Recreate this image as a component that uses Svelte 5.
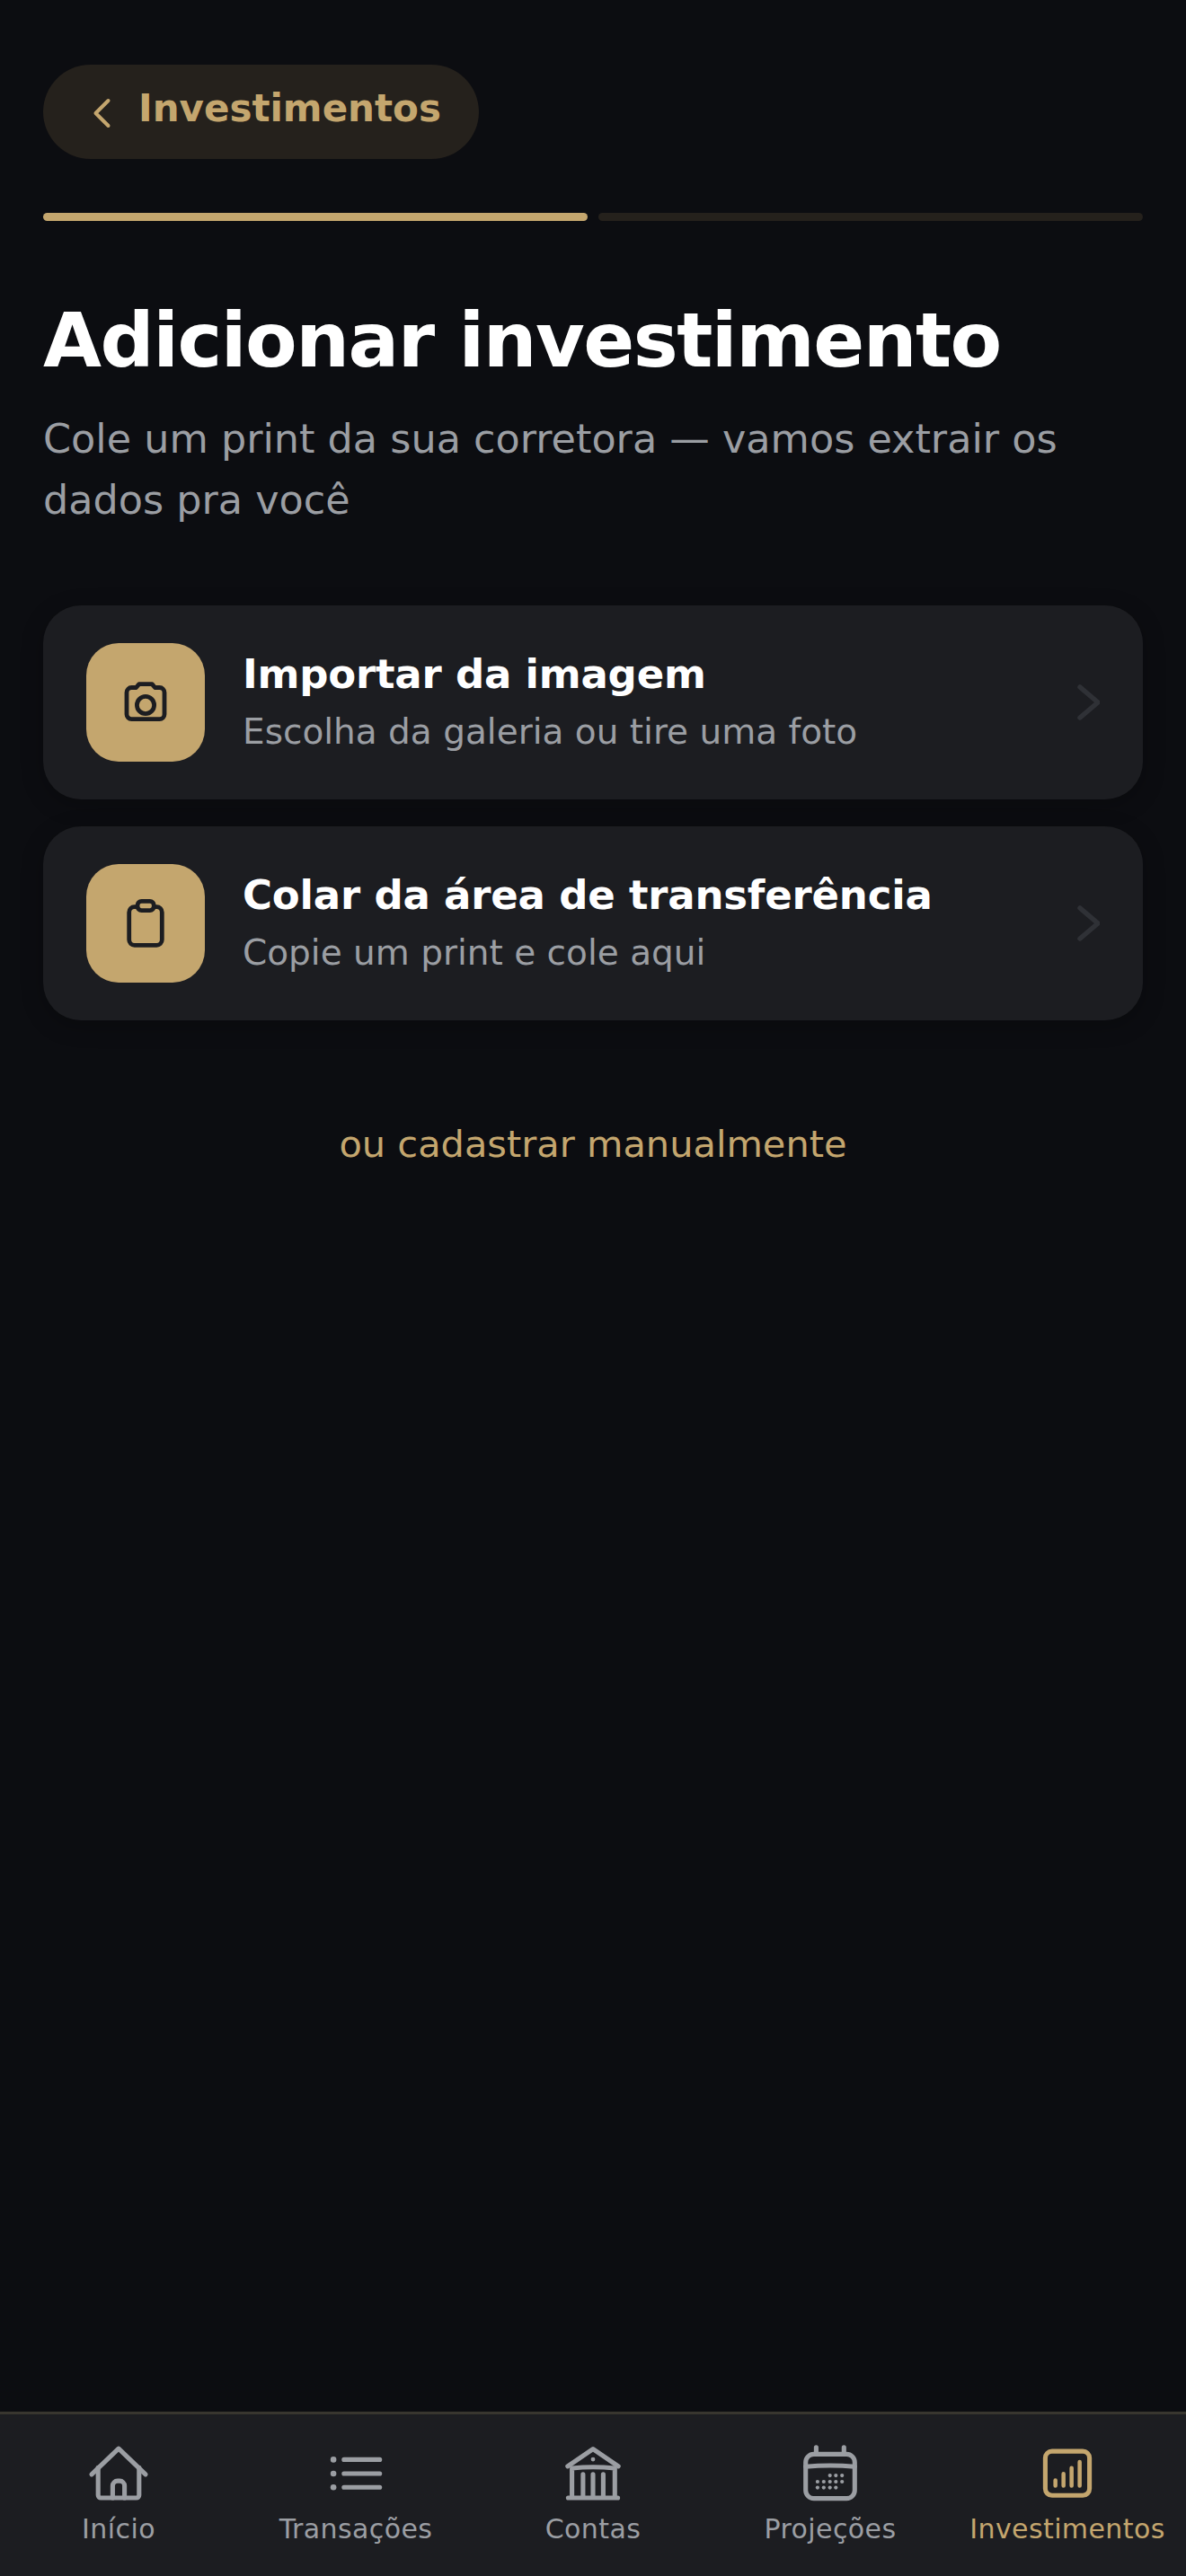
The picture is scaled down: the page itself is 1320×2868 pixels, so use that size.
<script lang="ts">
  const actions = [
    { title: "Importar da imagem", hint: "Escolha da galeria ou tire uma foto", icon: "camera" },
    { title: "Colar da área de transferência", hint: "Copie um print e cole aqui", icon: "clipboard" },
  ];

  const tabs = [
    { label: "Início", icon: "home" },
    { label: "Transações", icon: "list" },
    { label: "Contas", icon: "bank" },
    { label: "Projeções", icon: "calendar" },
    { label: "Investimentos", icon: "chart", active: true },
  ];

  const calendarDots = [
    [11.9, 12.7], [14.1, 12.7], [16.4, 12.7],
    [7.3, 15], [9.6, 15], [11.9, 15], [14.1, 15], [16.4, 15],
    [7.3, 17.2], [9.6, 17.2], [11.9, 17.2], [14.1, 17.2],
  ];
</script>

<div class="screen">
  <main class="content">
    <button class="back">
      <svg class="back-icon" width="48" height="48" viewBox="0 0 48 48" fill="none">
        <path d="M30.5 10 16.5 24l14 14" />
      </svg>
      <span class="back-label">Investimentos</span>
    </button>

    <div class="steps">
      <span class="step done"></span>
      <span class="step"></span>
    </div>

    <h1>Adicionar investimento</h1>
    <p class="lead">Cole um print da sua corretora — vamos extrair os dados pra você</p>

    <div class="actions">
      {#each actions as action}
        <button class="card">
          <span class="card-icon">
            <svg width="72" height="72" viewBox="0 0 24 24" fill="none">
              {#if action.icon === "camera"}
                <path d="M5 8.300a1.800 1.800 0 0 1 1.800-1.800h1.700l1.100-1.300h4.800l1.100 1.300h1.700a1.800 1.800 0 0 1 1.800 1.800v8.100a1.800 1.800 0 0 1-1.800 1.800H6.800a1.800 1.800 0 0 1-1.800-1.800z" />
                <circle cx="12" cy="13" r="3.200" />
              {:else}
                <rect x="5.900" y="5.900" width="12.200" height="14.200" rx="2" />
                <rect x="9" y="3.800" width="6.100" height="3.400" rx="1.500" />
              {/if}
            </svg>
          </span>
          <span class="card-text">
            <span class="card-title">{action.title}</span>
            <span class="card-hint">{action.hint}</span>
          </span>
          <svg class="card-arrow" width="48" height="48" viewBox="0 0 48 48" fill="none">
            <path d="M26 7l20 17-20 17" />
          </svg>
        </button>
      {/each}
    </div>

    <button class="manual">ou cadastrar manualmente</button>
  </main>

  <nav class="tabbar">
    {#each tabs as tab}
      <div class="tab" class:active={tab.active}>
        <svg width="72" height="72" viewBox="0 0 24 24" fill="none">
          {#if tab.icon === "home"}
            <path d="M2 12.300 12 2.700l10 9.600" />
            <path d="M4.400 9.800V20a1 1 0 0 0 1 1h13.200a1 1 0 0 0 1-1V9.800" />
            <path d="M9.800 21v-4.500a1.800 1.800 0 0 1 1.800-1.800h.8a1.800 1.800 0 0 1 1.800 1.800V21" />
          {:else if tab.icon === "list"}
            <path d="M7.600 6.800h13.300M7.600 12h13.300M7.600 17.100h13.300" />
            <circle class="dot" cx="3.700" cy="6.800" r="1.100" />
            <circle class="dot" cx="3.700" cy="12" r="1.100" />
            <circle class="dot" cx="3.700" cy="17.100" r="1.100" />
          {:else if tab.icon === "bank"}
            <path d="M2.600 9.300 12 2.900l9.400 6.400" />
            <circle class="dot" cx="12" cy="6.700" r=".8" />
            <path d="M4.200 20.800V10q7.800-.8 15.900 0v10.800" />
            <path d="M8.300 12.300v8.500M12 12.300v8.500M15.800 12.300v8.500" />
            <path d="M2.800 21h18.400" />
          {:else if tab.icon === "calendar"}
            <rect x="2.900" y="4.800" width="18.200" height="16.400" rx="3" />
            <path d="M6.800 2.300v2.500M17.100 2.300v2.500" />
            <path d="M2.900 9.400Q12 8.600 21.100 9.400" />
            {#each calendarDots as [cx, cy]}
              <circle class="dot" {cx} {cy} r=".7" />
            {/each}
          {:else}
            <rect x="3.800" y="3.700" width="16.400" height="16.400" rx="2.500" />
            <path class="bars" d="M7.550 14.500V16.500M10.550 12.100V16.500M13.550 9.900V16.500M16.550 7.700V16.500" />
          {/if}
        </svg>
        <span class="tab-label">{tab.label}</span>
      </div>
    {/each}
  </nav>
</div>

<style>
  :global(body) {
    margin: 0;
    background: #0c0d11;
  }

  .screen {
    display: flex;
    flex-direction: column;
    min-height: 2868px;
    font-family: "DejaVu Sans", sans-serif;
    color: #fff;
  }

  button {
    font-family: inherit;
    border: none;
    text-align: left;
    color: inherit;
    padding: 0;
  }

  .content {
    flex: 1;
    display: flex;
    flex-direction: column;
    padding: 72px 48px 0;
  }

  .back {
    align-self: flex-start;
    display: flex;
    align-items: center;
    gap: 16px;
    height: 105px;
    padding: 0 42px;
    border-radius: 53px;
    background: #25211c;
    color: #c4a66e;
    font-size: 42px;
    font-weight: 700;
  }

  .back-icon {
    margin-top: 3px;
  }

  .back-icon path {
    stroke: #c4a66e;
    stroke-width: 4;
    stroke-linecap: round;
    stroke-linejoin: round;
  }

  .back-label {
    padding-bottom: 9px;
  }

  .steps {
    display: flex;
    gap: 12px;
    margin-top: 60px;
  }

  .step {
    flex: 1;
    height: 9px;
    border-radius: 5px;
    background: #25211c;
  }

  .step.done {
    background: #c4a66e;
  }

  h1 {
    margin: 83px 0 0;
    font-size: 84px;
    font-weight: 700;
    line-height: 100px;
    letter-spacing: -1.5px;
  }

  .lead {
    margin: 26px 0 0;
    font-size: 44.5px;
    line-height: 68px;
    color: #9b9ea3;
  }

  .actions {
    display: flex;
    flex-direction: column;
    gap: 30px;
    margin-top: 83px;
  }

  .card {
    display: flex;
    align-items: center;
    gap: 42px;
    padding: 42px 48px;
    border-radius: 42px;
    background: #1c1d21;
    box-shadow: 0 6px 24px rgba(0, 0, 0, 0.25);
  }

  .card-icon {
    display: flex;
    align-items: center;
    justify-content: center;
    flex: none;
    width: 132px;
    height: 132px;
    border-radius: 36px;
    background: #c4a66e;
  }

  .card-icon path,
  .card-icon circle,
  .card-icon rect {
    stroke: #1c1d21;
    stroke-width: 1.6;
    stroke-linejoin: round;
  }

  .card-icon rect {
    fill: #c4a66e;
  }

  .card-text {
    flex: 1;
    display: flex;
    flex-direction: column;
    gap: 8px;
  }

  .card-title {
    font-size: 45px;
    font-weight: 700;
    line-height: 58px;
    letter-spacing: -0.2px;
    color: #fff;
  }

  .card-hint {
    font-size: 39px;
    line-height: 54px;
    color: #9b9ea3;
  }

  .card-arrow path {
    stroke: #2f3136;
    stroke-width: 5.5;
    stroke-linecap: round;
    stroke-linejoin: round;
  }

  .manual {
    align-self: center;
    margin-top: 111px;
    background: none;
    font-size: 41.5px;
    line-height: 54px;
    color: #c4a66e;
  }

  .tabbar {
    display: flex;
    height: 180px;
    border-top: 3px solid #38362f;
    background: #1c1d21;
  }

  .tab {
    flex: 1;
    display: flex;
    flex-direction: column;
    align-items: center;
    padding-top: 30px;
    color: #9b9ea3;
  }

  .tab svg {
    stroke: currentColor;
    stroke-width: 1.7;
    stroke-linecap: round;
    stroke-linejoin: round;
  }

  .tab .dot {
    fill: currentColor;
    stroke: none;
  }

  .tab .bars {
    stroke-width: 1.5;
  }

  .tab.active {
    color: #c4a66e;
  }

  .tab-label {
    margin-top: 6px;
    font-size: 30px;
    line-height: 40px;
    letter-spacing: 0.4px;
    white-space: nowrap;
  }
</style>
